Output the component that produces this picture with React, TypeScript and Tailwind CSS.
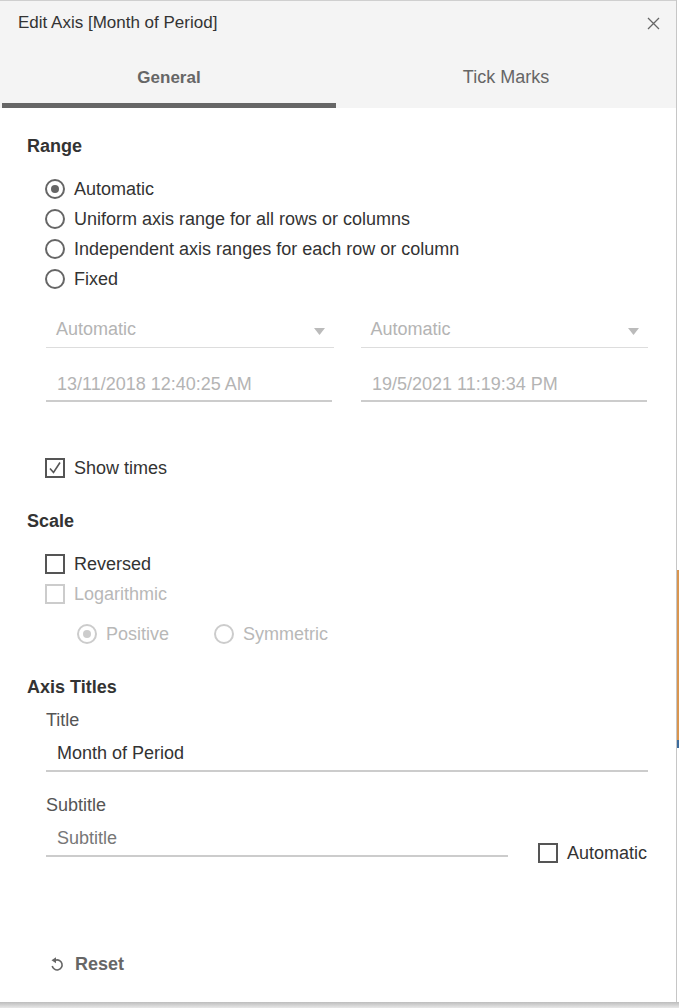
import React from "react";

const font = { fontFamily: '"Liberation Sans", Arial, sans-serif' };

const Radio = ({ checked, disabled }: { checked?: boolean; disabled?: boolean }) => (
  <span
    className={`flex h-[20px] w-[20px] shrink-0 items-center justify-center rounded-full border-2 ${
      disabled ? "border-[#cccccc]" : "border-[#666666]"
    }`}
  >
    {checked && (
      <span className={`h-[8px] w-[8px] rounded-full ${disabled ? "bg-[#cccccc]" : "bg-[#666666]"}`} />
    )}
  </span>
);

const Checkbox = ({ checked, disabled }: { checked?: boolean; disabled?: boolean }) => (
  <span
    className={`flex h-[20px] w-[20px] shrink-0 items-center justify-center border-2 ${
      disabled ? "border-[#cccccc]" : "border-[#555555]"
    }`}
  >
    {checked && (
      <svg width="14" height="14" viewBox="0 0 14 14">
        <path d="M2 7.5 L5.5 11.5 L12 1.5" fill="none" stroke="#555555" strokeWidth="1.6" />
      </svg>
    )}
  </span>
);

const Option = ({
  label,
  type,
  checked,
  disabled,
}: {
  label: string;
  type: "radio" | "check";
  checked?: boolean;
  disabled?: boolean;
}) => (
  <div className="flex h-[30px] items-center gap-[9px]">
    {type === "radio" ? <Radio checked={checked} disabled={disabled} /> : <Checkbox checked={checked} disabled={disabled} />}
    <span className={`text-[18px] ${disabled ? "text-[#b8b8b8]" : "text-[#333333]"}`}>{label}</span>
  </div>
);

const Heading = ({ children }: { children: React.ReactNode }) => (
  <div className="flex h-[24px] items-center text-[18px] font-bold text-[#333333]">{children}</div>
);

const Select = () => (
  <div className="flex h-[37px] flex-1 items-center justify-between border-b border-[#dddddd] pl-[10px] pr-[9px] pt-[1px]">
    <span className="text-[18px] text-[#b4b4b4]">Automatic</span>
    <svg width="11" height="7" viewBox="0 0 11 7" className="mt-[4px]">
      <path d="M0 0 H11 L5.5 7 Z" fill="#bbbbbb" />
    </svg>
  </div>
);

const DateInput = ({ value }: { value: string }) => (
  <div className="flex h-[38px] flex-1 items-center border-b-2 border-[#cccccc] pl-[11px] pt-[4px]">
    <span className="text-[18px] text-[#b4b4b4]">{value}</span>
  </div>
);

export default function App() {
  return (
    <div className="flex h-[1008px] w-[679px] flex-col bg-[#d9d9d9]" style={font}>
      <div className="flex h-[1002px] w-[679px]">
        <div className="flex w-[677px] flex-col border-r border-[#c6c6c6] bg-white">
          {/* header */}
          <div className="flex h-[108px] flex-col border-t border-[#cfcfcf] bg-[#f4f4f4]">
            <div className="flex h-[44px] items-center justify-between pl-[18px] pr-[16px]">
              <span className="text-[17px] text-[#333333]">Edit Axis [Month of Period]</span>
              <svg width="13" height="13" viewBox="0 0 13 13">
                <path d="M1 1 L12 12 M12 1 L1 12" stroke="#666666" strokeWidth="1.3" />
              </svg>
            </div>
            <div className="flex flex-1 pl-[2px]">
              <div className="flex w-[334px] flex-col">
                <div className="flex flex-1 items-center justify-center pt-[7px] text-[17px] font-bold text-[#666666]">
                  General
                </div>
                <div className="h-[5px] bg-[#666666]" />
              </div>
              <div className="flex flex-1 flex-col">
                <div className="flex flex-1 items-center justify-center pt-[6px] text-[18px] text-[#666666]">
                  Tick Marks
                </div>
                <div className="h-[5px]" />
              </div>
            </div>
          </div>

          {/* body */}
          <div className="flex flex-1 flex-col pl-[27px] pr-[28px]">
            <div className="mt-[26px]">
              <Heading>Range</Heading>
            </div>
            <div className="mt-[16px] flex flex-col pl-[18px]">
              <Option type="radio" checked label="Automatic" />
              <Option type="radio" label="Uniform axis range for all rows or columns" />
              <Option type="radio" label="Independent axis ranges for each row or column" />
              <Option type="radio" label="Fixed" />
              <div className="mt-[17px] flex gap-[27px] pl-[1px]">
                <Select />
                <Select />
              </div>
              <div className="mt-[16px] flex gap-[29px] pl-[1px] pr-[1px]">
                <DateInput value="13/11/2018 12:40:25 AM" />
                <DateInput value="19/5/2021 11:19:34 PM" />
              </div>
              <div className="mt-[51px]">
                <Option type="check" checked label="Show times" />
              </div>
            </div>

            <div className="mt-[26px]">
              <Heading>Scale</Heading>
            </div>
            <div className="mt-[16px] flex flex-col pl-[18px]">
              <Option type="check" label="Reversed" />
              <Option type="check" disabled label="Logarithmic" />
              <div className="mt-[10px] flex gap-[45px] pl-[32px]">
                <Option type="radio" disabled checked label="Positive" />
                <Option type="radio" disabled label="Symmetric" />
              </div>
            </div>

            <div className="mt-[26px]">
              <Heading>Axis Titles</Heading>
            </div>
            <div className="flex flex-col pl-[19px]">
              <div className="mt-[11px] flex h-[20px] items-center text-[18px] text-[#555555]">Title</div>
              <div className="mt-[3px] flex h-[39px] items-center border-b-2 border-[#cccccc] pl-[11px] pt-[3px]">
                <span className="text-[18px] text-[#333333]">Month of Period</span>
              </div>
              <div className="mt-[23px] flex h-[20px] items-center text-[18px] text-[#555555]">Subtitle</div>
              <div className="mt-[2px] flex items-end">
                <div className="flex h-[40px] w-[462px] items-center border-b-2 border-[#cccccc] pl-[11px] pt-[4px]">
                  <span className="text-[18px] text-[#777777]">Subtitle</span>
                </div>
                <div className="ml-[30px] mb-[-11px]">
                  <Option type="check" label="Automatic" />
                </div>
              </div>
            </div>

            <div className="mt-auto mb-[26px] flex h-[24px] items-center gap-[11px] pl-[23px]">
              <svg width="14" height="16" viewBox="0 0 14 16">
                <path d="M5.5 4.2 A5 5 0 1 1 2.2 10" fill="none" stroke="#666666" strokeWidth="1.6" />
                <path d="M1.5 4.2 L6 1.2 L6 7.2 Z" fill="#666666" />
              </svg>
              <span className="text-[18px] font-bold text-[#666666]">Reset</span>
            </div>
          </div>
        </div>
        <div className="flex w-[2px] flex-col bg-white">
          <div className="h-[570px]" />
          <div className="h-[170px] bg-[#d9954f]" />
          <div className="h-[8px] bg-[#3e6c9c]" />
        </div>
      </div>
      <div className="h-[6px] bg-gradient-to-b from-[#bdbdbd] to-[#e8e8e8]" />
    </div>
  );
}
